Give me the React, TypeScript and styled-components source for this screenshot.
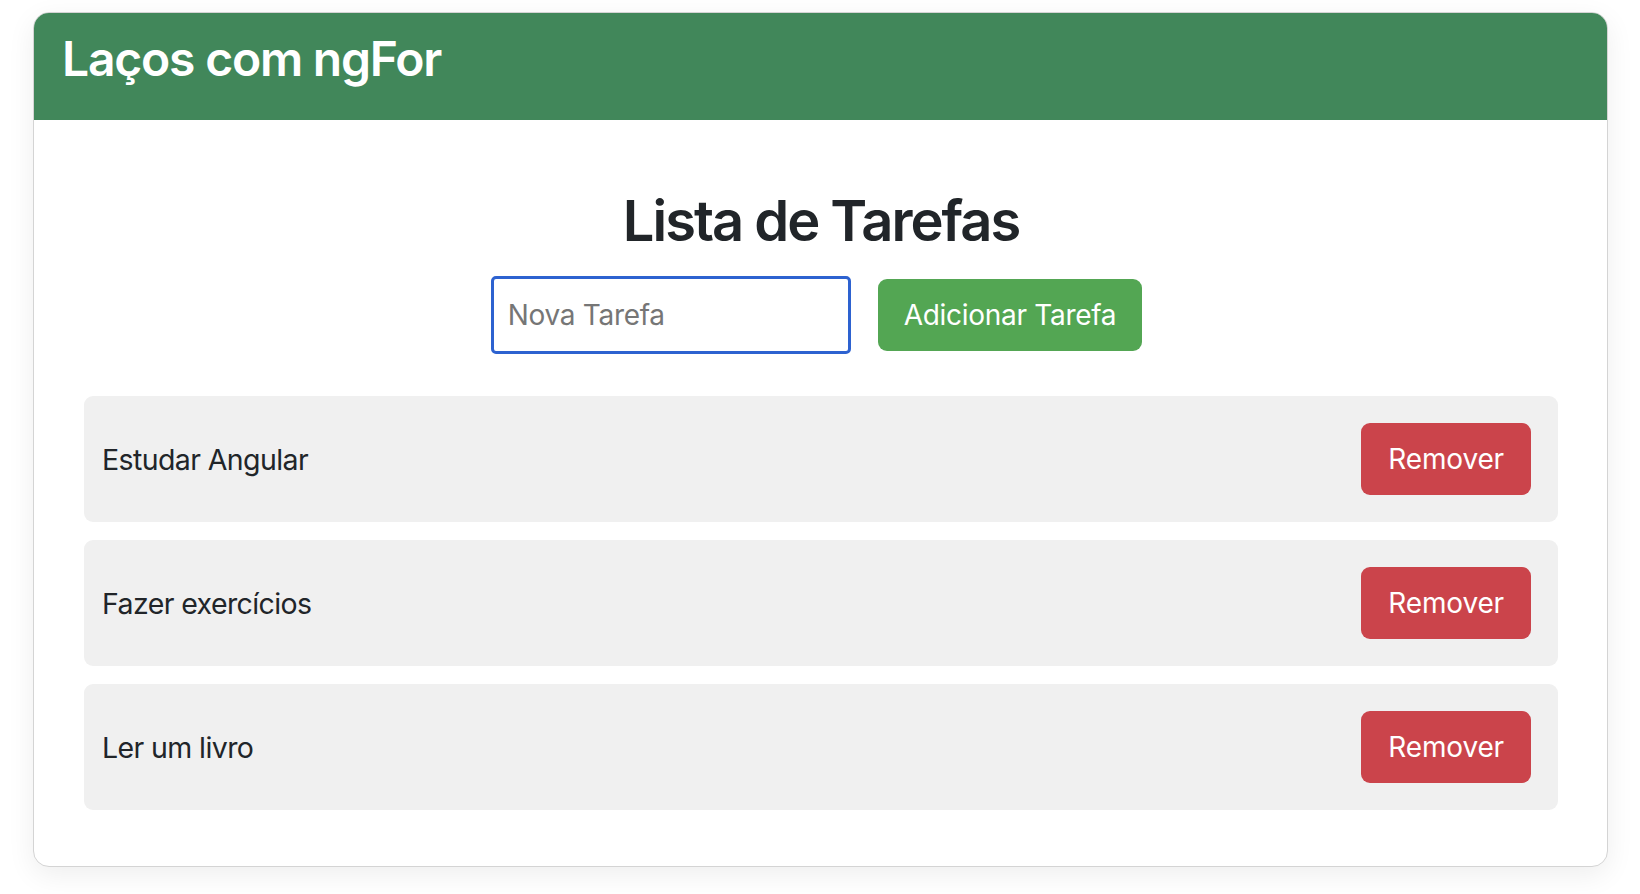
import React from "react";
import styled, { createGlobalStyle } from "styled-components";

const GlobalStyle = createGlobalStyle`
  html, body {
    margin: 0;
    padding: 0;
    background: #ffffff;
  }
  body {
    font-family: Inter, "Noto Sans", "Liberation Sans", sans-serif;
    color: #212529;
    -webkit-font-smoothing: antialiased;
  }
  * { box-sizing: border-box; }
`;

const Page = styled.div`
  padding: 12px 32px 40px 33px;
`;

const Card = styled.section`
  border: 1px solid #d4d4d4;
  border-radius: 16px;
  overflow: hidden;
  background: #ffffff;
  box-shadow: 0 8px 28px rgba(0, 0, 0, 0.07);
`;

const CardHeader = styled.header`
  height: 107px;
  background: #41875a;
  padding: 17px 28px 0;
`;

const HeaderTitle = styled.h2`
  margin: 0;
  font-size: 48px;
  line-height: 58px;
  font-weight: 600;
  color: #ffffff;
  letter-spacing: -1.2px;
`;

const CardBody = styled.div`
  padding: 68px 49px 56px 50px;
`;

const ListTitle = styled.h3`
  margin: 0 0 21px;
  text-align: center;
  font-size: 56px;
  line-height: 67px;
  font-weight: 600;
  color: #212529;
  letter-spacing: -2px;
`;

const AddForm = styled.div`
  display: flex;
  justify-content: center;
  align-items: center;
  gap: 27px;
  padding-right: 9px;
  margin-bottom: 42px;
`;

const TaskInput = styled.input`
  width: 360px;
  height: 78px;
  border: 3px solid #2d62d0;
  border-radius: 5px;
  padding: 0 14px;
  font-family: inherit;
  font-size: 28px;
  color: #212529;
  outline: none;
  letter-spacing: -0.3px;
  &::placeholder {
    color: #767676;
  }
`;

const Button = styled.button<{ $tone: "success" | "danger" }>`
  height: 72px;
  border: none;
  border-radius: 9px;
  padding: 0 ${(p) => (p.$tone === "success" ? "26px" : "27px")};
  font-family: inherit;
  font-size: 28px;
  font-weight: 400;
  line-height: 42px;
  color: #ffffff;
  letter-spacing: ${(p) => (p.$tone === "success" ? "-0.3px" : "-0.15px")};
  cursor: pointer;
  background: ${(p) => (p.$tone === "success" ? "#53a653" : "#cb444b")};
`;

const TaskList = styled.ul`
  list-style: none;
  margin: 0;
  padding: 0;
  display: flex;
  flex-direction: column;
  gap: 18px;
`;

const TaskRow = styled.li`
  height: 126px;
  background: #f0f0f0;
  border-radius: 9px;
  display: flex;
  align-items: center;
  justify-content: space-between;
  padding: 0 27px 0 18px;
`;

const TaskText = styled.span`
  font-size: 28.5px;
  color: #212529;
  letter-spacing: -0.6px;
`;

const tasks = ["Estudar Angular", "Fazer exercícios", "Ler um livro"];

export default function App() {
  return (
    <>
      <GlobalStyle />
      <Page>
        <Card>
          <CardHeader>
            <HeaderTitle>Laços com ngFor</HeaderTitle>
          </CardHeader>
          <CardBody>
            <ListTitle>Lista de Tarefas</ListTitle>
            <AddForm>
              <TaskInput placeholder="Nova Tarefa" />
              <Button $tone="success">Adicionar Tarefa</Button>
            </AddForm>
            <TaskList>
              {tasks.map((t) => (
                <TaskRow key={t}>
                  <TaskText>{t}</TaskText>
                  <Button $tone="danger">Remover</Button>
                </TaskRow>
              ))}
            </TaskList>
          </CardBody>
        </Card>
      </Page>
    </>
  );
}
